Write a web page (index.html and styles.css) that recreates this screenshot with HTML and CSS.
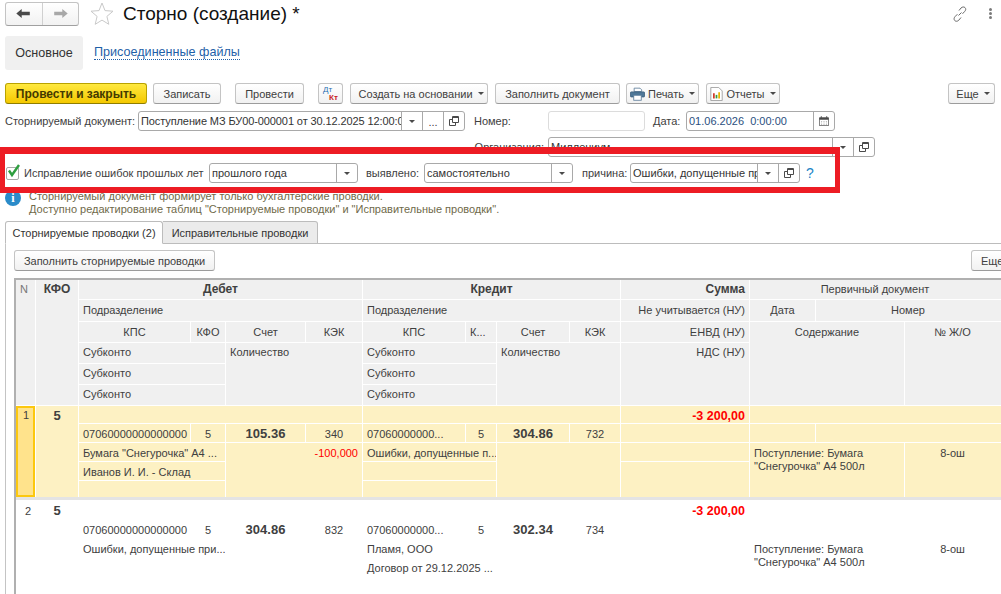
FILE: index.html
```html
<!DOCTYPE html>
<html lang="ru">
<head>
<meta charset="utf-8">
<title>Сторно (создание)</title>
<link rel="stylesheet" href="styles.css">
</head>
<body>
<svg class="defs" width="0" height="0" aria-hidden="true">
  <symbol id="open" viewBox="0 0 10 10"><path d="M3.500 3.500H.5v6h6v-3M3.500.5h6v6h-6z" fill="none" stroke="#4a4a4a"/><path d="M3.500 1.500h6" stroke="#4a4a4a"/></symbol>
</svg>
<div class="page">
  <header class="head">
    <div class="nav">
      <button class="nav-btn"><svg width="15" height="9" viewBox="0 0 16 10"><path d="M6 0 0 5l6 5V7h9V3H6z" fill="#4a4a4a"/></svg></button>
      <button class="nav-btn"><svg width="15" height="9" viewBox="0 0 16 10"><path d="M10 0l6 5-6 5V7H1V3h9z" fill="#a8a8a8"/></svg></button>
    </div>
    <svg class="star" width="24" height="23" viewBox="0 0 24 23"><path d="M12 1l3 7.600 8 .6-6.100 5.200 1.900 7.900L12 18.100 5.200 22.300l1.900-7.900L1 9.200l8-.6z" fill="#fff" stroke="#c9c9c9"/></svg>
    <h1 class="title">Сторно (создание) *</h1>
    <svg class="link-ic" width="16" height="16" viewBox="0 0 16 16"><path d="M6.500 9.500l3-3M7 4.500l2-2.500c1.500-1.300 3-1.300 4-.4s1 2.400-.2 3.700l-2.300 2.500M9 11.500l-2.200 2.700c-1.300 1.300-3 1.400-4 .4s-1-2.600.2-3.900l2.400-2.500" fill="none" stroke="#6a6a6a"/></svg>
    <div class="dots"><i></i><i></i><i></i></div>
  </header>

  <nav class="views">
    <span class="view-cur">Основное</span>
    <a class="view-link">Присоединенные файлы</a>
  </nav>

  <div class="toolbar">
    <button class="btn btn-main w-post-close">Провести и закрыть</button>
    <button class="btn w-save">Записать</button>
    <button class="btn w-post">Провести</button>
    <button class="btn w-dtkt"><span class="dt">Дт</span><span class="kt">Кт</span></button>
    <button class="btn w-create">Создать на основании<i class="caret"></i></button>
    <button class="btn w-fill">Заполнить документ</button>
    <button class="btn w-print">
      <svg width="15" height="14" viewBox="0 0 18 16"><path d="M5 5V1h7l2 2v2z" fill="#fff" stroke="#5c7c99"/><rect x=".5" y="5.500" width="17" height="6" rx="1" fill="#4f7898" stroke="#3d5f7c"/><rect x="4.500" y="9.500" width="9" height="6" fill="#fff" stroke="#5c7c99"/></svg>
      Печать<i class="caret"></i></button>
    <button class="btn w-report">
      <svg width="13" height="14" viewBox="0 0 14 16"><path d="M.5.500h9l4 4v11H.5z" fill="#fff" stroke="#9a9a9a"/><path d="M3 7h2v6H3z" fill="#d23c2c"/><path d="M6 9h2v4H6z" fill="#3c9a3c"/><path d="M9 6h2v7H9z" fill="#e8b400"/></svg>
      Отчеты<i class="caret"></i></button>
    <button class="btn w-more push">Еще<i class="caret"></i></button>
  </div>

  <div class="form-row row-doc">
    <span class="lbl w-l-doc">Сторнируемый документ:</span>
    <div class="field w-f-doc"><span class="val val-tight">Поступление МЗ БУ00-000001 от 30.12.2025 12:00:00</span><span class="fbtn"><i class="caret"></i></span><span class="fbtn dotsbtn">...</span><span class="fbtn"><svg width="10" height="10"><use href="#open"/></svg></span></div>
    <span class="lbl w-l-num">Номер:</span>
    <div class="field field-off w-f-num"></div>
    <span class="lbl w-l-date">Дата:</span>
    <div class="field w-f-date"><span class="val val-date">01.06.2026  0:00:00</span><span class="fbtn">
      <svg width="10" height="10" viewBox="0 0 13 13"><path d="M.500 2.500h12v10H.500z" fill="#fff" stroke="#4a4a4a"/><path d="M.500 2h12v3H.500z" fill="#4a4a4a"/><path d="M3 0v3M10 0v3" stroke="#4a4a4a"/><path d="M3 7h1v1H3zm3 0h1v1H6zm3 0h1v1H9zM3 10h1v1H3zm3 0h1v1H6zm3 0h1v1H9z" fill="#4a4a4a"/></svg></span></div>
  </div>

  <div class="form-row row-org">
    <span class="lbl w-l-org">Организация:</span>
    <div class="field w-f-org"><span class="val">Миллениум</span><span class="fbtn"><i class="caret"></i></span><span class="fbtn"><svg width="10" height="10"><use href="#open"/></svg></span></div>
  </div>

  <div class="form-row row-err">
    <span class="check"><svg width="15" height="15" viewBox="0 0 15 15"><path d="M3 6.500l3 4.500 7-10" fill="none" stroke="#2e9e3f" stroke-width="2.400"/></svg></span>
    <span class="lbl w-l-err">Исправление ошибок прошлых лет</span>
    <div class="field w-f-year"><span class="val">прошлого года</span><span class="fbtn"><i class="caret"></i></span></div>
    <span class="lbl w-l-found">выявлено:</span>
    <div class="field w-f-found"><span class="val">самостоятельно</span><span class="fbtn"><i class="caret"></i></span></div>
    <span class="lbl w-l-reason">причина:</span>
    <div class="field w-f-reason"><span class="val">Ошибки, допущенные при</span><span class="fbtn"><i class="caret"></i></span><span class="fbtn"><svg width="10" height="10"><use href="#open"/></svg></span></div>
    <span class="hint">?</span>
  </div>

  <div class="info">
    <span class="info-ic">i</span>
    <p class="info-text">Сторнируемый документ формирует только бухгалтерские проводки.<br>Доступно редактирование таблиц "Сторнируемые проводки" и "Исправительные проводки".</p>
  </div>

  <div class="tabs">
    <span class="tab tab-cur">Сторнируемые проводки (2)</span>
    <span class="tab">Исправительные проводки</span>
  </div>

  <section class="panel">
    <div class="panel-bar">
      <button class="btn w-fill-rev">Заполнить сторнируемые проводки</button>
      <button class="btn w-more-cut push">Еще</button>
    </div>

    <div class="table">
      <div class="grid grid-head">
        <div class="h c1 r1-6 ctr n">N</div>
        <div class="h c2 r1-6 ctr b">КФО</div>
        <div class="h c3-7 ctr b">Дебет</div>
        <div class="h c7-11 ctr b">Кредит</div>
        <div class="h c11 rgt b">Сумма</div>
        <div class="h c12-15 ctr end">Первичный документ</div>

        <div class="h c3-7 low">Подразделение</div>
        <div class="h c7-11 low">Подразделение</div>
        <div class="h c11 rgt low">Не учитывается (НУ)</div>
        <div class="h c12 ctr low">Дата</div>
        <div class="h c13-15 ctr end low">Номер</div>

        <div class="h c3 ctr low">КПС</div>
        <div class="h c4 ctr low">КФО</div>
        <div class="h c5 ctr low">Счет</div>
        <div class="h c6 ctr low">КЭК</div>
        <div class="h c7 ctr low">КПС</div>
        <div class="h c8 low">К...</div>
        <div class="h c9 ctr low">Счет</div>
        <div class="h c10 ctr low">КЭК</div>
        <div class="h c11 rgt low">ЕНВД (НУ)</div>
        <div class="h c12-14 r3-7 ctr low">Содержание</div>
        <div class="h c14 r3-7 ctr end low">№ Ж/О</div>

        <div class="h c3-5 r4">Субконто</div>
        <div class="h c5-7 r4-7">Количество</div>
        <div class="h c7-9 r4">Субконто</div>
        <div class="h c9-11 r4-7">Количество</div>
        <div class="h c11 r4-7 rgt">НДС (НУ)</div>
        <div class="h c3-5 r5">Субконто</div>
        <div class="h c7-9 r5">Субконто</div>
        <div class="h c3-5 r6">Субконто</div>
        <div class="h c7-9 r6">Субконто</div>
      </div>

      <div class="grid grid-row row-sel">
        <div class="d c1 d-all cur rgt">1</div>
        <div class="d c2 d-all ctr b big">5</div>
        <div class="d c3-7"></div>
        <div class="d c7-11"></div>
        <div class="d c11 rgt b sum red">-3 200,00</div>
        <div class="d c12-15"></div>

        <div class="d c3">07060000000000000</div>
        <div class="d c4 ctr">5</div>
        <div class="d c5 ctr b big">105.36</div>
        <div class="d c6 ctr">340</div>
        <div class="d c7">07060000000...</div>
        <div class="d c8 ctr">5</div>
        <div class="d c9 ctr b big">304.86</div>
        <div class="d c10 ctr">732</div>
        <div class="d c11"></div>
        <div class="d c12"></div>
        <div class="d c13-15"></div>

        <div class="d c3-5 r3">Бумага "Снегурочка" А4 ...</div>
        <div class="d c5-7 d-low rgt red">-100,000</div>
        <div class="d c7-9 r3">Ошибки, допущенные п...</div>
        <div class="d c9-11 d-low"></div>
        <div class="d c11 r3"></div>
        <div class="d c12-14 d-low txt">Поступление: Бумага "Снегурочка" А4 500л</div>
        <div class="d c14 d-low ctr end">8-ош</div>

        <div class="d c3-5 r4">Иванов И. И. - Склад</div>
        <div class="d c7-9 r4"></div>
        <div class="d c11 r4-6"></div>
        <div class="d c3-5 r5"></div>
        <div class="d c7-9 r5"></div>
      </div>

      <div class="grid grid-row">
        <div class="d c1 d-all rgt num2">2</div>
        <div class="d c2 d-all ctr b big">5</div>
        <div class="d c11 rgt b sum red">-3 200,00</div>

        <div class="d c3 r2">07060000000000000</div>
        <div class="d c4 r2 ctr">5</div>
        <div class="d c5 r2 ctr b big">304.86</div>
        <div class="d c6 r2 ctr">832</div>
        <div class="d c7 r2">07060000000...</div>
        <div class="d c8 r2 ctr">5</div>
        <div class="d c9 r2 ctr b big">302.34</div>
        <div class="d c10 r2 ctr">734</div>

        <div class="d c3-5 r3">Ошибки, допущенные при...</div>
        <div class="d c7-9 r3">Пламя, ООО</div>
        <div class="d c12-14 d-low txt">Поступление: Бумага "Снегурочка" А4 500л</div>
        <div class="d c14 d-low ctr end">8-ош</div>
        <div class="d c7-9 r4">Договор от 29.12.2025 ...</div>
      </div>
    </div>
  </section>

  <div class="annot"></div>
</div>
</body>
</html>
```
FILE: styles.css
```css
* { box-sizing: border-box; }
html, body { margin: 0; padding: 0; background: #fff; }
body { font: 11px/16px "Liberation Sans", Arial, sans-serif; color: #404040; }
.defs { position: absolute; }
.page { position: relative; width: 1001px; height: 594px; overflow: hidden; background: #fff; }

/* header */
.head { display: flex; align-items: center; height: 26px; padding: 1px 0 0 5px; }
.nav { display: flex; width: 74px; height: 24px; border: 1px solid #c4c4c4; border-bottom-color: #a0a0a0; border-radius: 3px; background: linear-gradient(#fff, #f2f2f2); }
.nav-btn { flex: 1; display: flex; align-items: center; justify-content: center; padding: 0; border: 0; background: none; }
.nav-btn + .nav-btn { border-left: 1px solid #d0d0d0; }
.star { margin-left: 11px; }
.title { margin: 0 0 0 9px; font: 400 19px/24px "Liberation Sans", Arial, sans-serif; color: #111; }
.link-ic { margin-left: auto; }
.dots { display: flex; flex-direction: column; gap: 1px; margin: 0 9px 0 21px; }
.dots i { display: block; width: 3px; height: 3px; border-radius: 50%; background: #7a7a7a; }

/* view tabs */
.views { display: flex; align-items: center; height: 34px; margin: 10px 0 0 5px; font-size: 12.600px; }
.view-cur { display: flex; align-items: center; justify-content: center; width: 78px; height: 34px; border-radius: 3px; background: #f0f0f0; color: #333; }
.view-link { margin-left: 11px; color: #1f5fa8; border-bottom: 1px dotted #1f5fa8; line-height: 13px; }

/* buttons */
.btn { display: inline-flex; align-items: center; justify-content: center; height: 21px; padding: 0; border: 1px solid #c4c4c4; border-bottom-color: #9c9c9c; border-radius: 3px; background: linear-gradient(#fff, #f1f1f1); font: 11px/16px "Liberation Sans", Arial, sans-serif; color: #404040; white-space: nowrap; }
.btn svg { margin-right: 3px; }
.btn-main { border-color: #b9a200; border-bottom-color: #8f7d00; background: linear-gradient(#ffe93f, #f4c800); font-size: 12px; font-weight: 700; color: #443a00; }
.caret { display: inline-block; margin-left: 5px; border: solid transparent; border-width: 3px 3.500px 0; border-top-color: #4a4a4a; }
.toolbar { display: flex; height: 21px; margin: 13px 0 0; padding: 0 6px 0 5px; }
.w-post-close { width: 142px; }
.w-save { width: 68px; margin-left: 6px; }
.w-post { width: 69px; margin-left: 14px; }
.w-dtkt { position: relative; width: 25px; margin-left: 14px; }
.dt { position: absolute; left: 4px; top: 1px; font-size: 8px; line-height: 9px; color: #2a6fb0; }
.kt { position: absolute; left: 10px; top: 9px; font-size: 8px; line-height: 9px; font-weight: 700; color: #c81e1e; }
.w-create { width: 138px; margin-left: 7px; padding-left: 4px; }
.w-fill { width: 125px; margin-left: 7px; }
.w-print { width: 73px; margin-left: 6px; }
.w-report { width: 74px; margin-left: 7px; }
.w-more { width: 47px; padding-left: 3px; }
.push { margin-left: auto; }

/* form */
.form-row { display: flex; align-items: center; height: 20px; }
.row-doc { margin-top: 7px; padding-left: 5px; }
.row-org { margin-top: 6px; }
.row-err { margin-top: 6px; padding-left: 6px; }
.lbl { white-space: nowrap; color: #404040; }
.w-l-doc { width: 133px; }
.w-l-num { width: 74px; margin-left: 9px; }
.w-l-date { width: 33px; margin-left: 8px; }
.w-l-org { width: 544px; text-align: right; margin-right: 4px; }
.w-l-err { width: 185px; margin-left: 5px; }
.w-l-found { width: 58px; margin-left: 8px; }
.w-l-reason { width: 48px; margin-left: 9px; }
.field { display: flex; height: 20px; border: 1px solid #a9a9a9; border-radius: 3px; background: #fff; overflow: hidden; }
.field-off { border-color: #dcdcdc; }
.val { flex: 1; min-width: 0; padding: 0 2px; line-height: 18px; color: #333; white-space: pre; overflow: hidden; }
.val-tight { letter-spacing: -0.100px; }
.val-date { color: #2b4f80; }
.fbtn { flex: none; display: flex; align-items: center; justify-content: center; width: 21px; border-left: 1px solid #a9a9a9; }
.fbtn .caret { margin: 0; }
.dotsbtn { align-items: flex-end; line-height: 16px; }
.w-f-doc { width: 327px; }
.w-f-num { width: 97px; }
.w-f-date { width: 149px; }
.w-f-org { width: 327px; }
.w-f-year { width: 149px; }
.w-f-found { width: 149px; }
.w-f-reason { width: 170px; }
.check { position: relative; width: 13px; height: 13px; border: 1px solid #a9a9a9; border-radius: 2px; }
.check svg { position: absolute; left: -1px; top: -4px; }
.hint { margin-left: 6px; font-size: 14px; color: #1c84c6; }

/* info */
.info { display: flex; height: 26px; margin: 7px 0 0 5px; }
.info-ic { flex: none; width: 16px; height: 16px; border-radius: 50%; background: #2a8bc9; color: #fff; font: 700 12px/16px "Liberation Serif", serif; text-align: center; }
.info-text { margin: 0 0 0 8px; line-height: 13px; color: #6f6a4a; white-space: nowrap; }

/* tabs */
.tabs { position: relative; z-index: 1; display: flex; height: 23px; margin: 5px 0 0 5px; }
.tab { display: flex; align-items: center; justify-content: center; width: 155px; height: 23px; border: 1px solid #bcbcbc; border-left: 0; border-radius: 0 3px 0 0; background: #ebebeb; color: #333; }
.tab-cur { width: 158px; border-left: 1px solid #bcbcbc; border-bottom-color: #fff; border-radius: 3px 3px 0 0; background: #fff; }

/* panel */
.panel { height: 400px; margin: -1px 0 0 5px; border-top: 1px solid #bcbcbc; border-left: 1px solid #c4c4c4; }
.panel-bar { display: flex; height: 21px; margin-top: 6px; padding-left: 8px; }
.w-fill-rev { width: 201px; }
.w-more-cut { width: 40px; margin-right: -10px; justify-content: flex-start; padding-left: 9px; }
.table { width: 1000px; margin: 7px 0 0 8px; border-top: 2px solid #b0b0b0; border-left: 2px solid #b0b0b0; }

/* grid */
.grid { display: grid; gap: 1px; grid-template-columns: 19px 42px 111px 34px 79px 56px 102px 30px 72px 50px 128px 65px 88px 95px 20px; background: #fff; }
.grid-head { grid-template-rows: 19px 21px 20px 20px 20px 20px; }
.grid-row { grid-template-rows: 18px 18px 18px 18px 18px; border-top: 1px solid #fff; }
.row-sel { grid-template-rows: 17px 18px 18px 18px 16px; border-bottom: 3px solid #e4e4e4; }
.h { padding: 0 4px; background: #f0f0f0; line-height: 19px; white-space: nowrap; overflow: hidden; }
.h.low { line-height: 21px; }
.d { padding: 0 4px; line-height: 20px; color: #404040; white-space: nowrap; overflow: hidden; }
.row-sel .d { background: #fdf1c3; }
.row-sel .d.cur { border: 2px solid #fcc80f; background: #ffe38c; line-height: 14px; padding-right: 4px; }
.num2 { padding-right: 4px; }
.ctr { text-align: center; }
.rgt { text-align: right; }
.end { padding-right: 25px; }
.b { font-weight: 700; }
.h.b { font-size: 12px; }
.big { font-size: 13px; }
.sum { font-size: 12.500px; }
.red { color: #f00; }
.n { color: #777; text-align: left; padding-left: 4px; }
.d.txt { padding-top: 4px; line-height: 13px; white-space: normal; }

.c1 { grid-column: 1; } .c2 { grid-column: 2; } .c3 { grid-column: 3; } .c4 { grid-column: 4; }
.c5 { grid-column: 5; } .c6 { grid-column: 6; } .c7 { grid-column: 7; } .c8 { grid-column: 8; }
.c9 { grid-column: 9; } .c10 { grid-column: 10; } .c11 { grid-column: 11; } .c12 { grid-column: 12; }
.c14 { grid-column: 14 / 16; }
.c3-7 { grid-column: 3 / 7; } .c7-11 { grid-column: 7 / 11; } .c12-15 { grid-column: 12 / 16; }
.c13-15 { grid-column: 13 / 16; } .c12-14 { grid-column: 12 / 14; }
.c3-5 { grid-column: 3 / 5; } .c5-7 { grid-column: 5 / 7; } .c7-9 { grid-column: 7 / 9; } .c9-11 { grid-column: 9 / 11; }
.r1-6 { grid-row: 1 / 7; } .r3-7 { grid-row: 3 / 7; } .r4-7 { grid-row: 4 / 7; }
.r2 { grid-row: 2; } .r3 { grid-row: 3; } .r4 { grid-row: 4; } .r5 { grid-row: 5; } .r6 { grid-row: 6; }
.r4-6 { grid-row: 4 / 6; }
.d-all { grid-row: 1 / 6; }
.d-low { grid-row: 3 / 6; }

/* annotation frame drawn over the form */
.annot { position: absolute; left: 0; top: 147px; width: 840px; height: 46px; border: solid #ed1c24; border-width: 7px 5px 6px 5px; pointer-events: none; }
```
